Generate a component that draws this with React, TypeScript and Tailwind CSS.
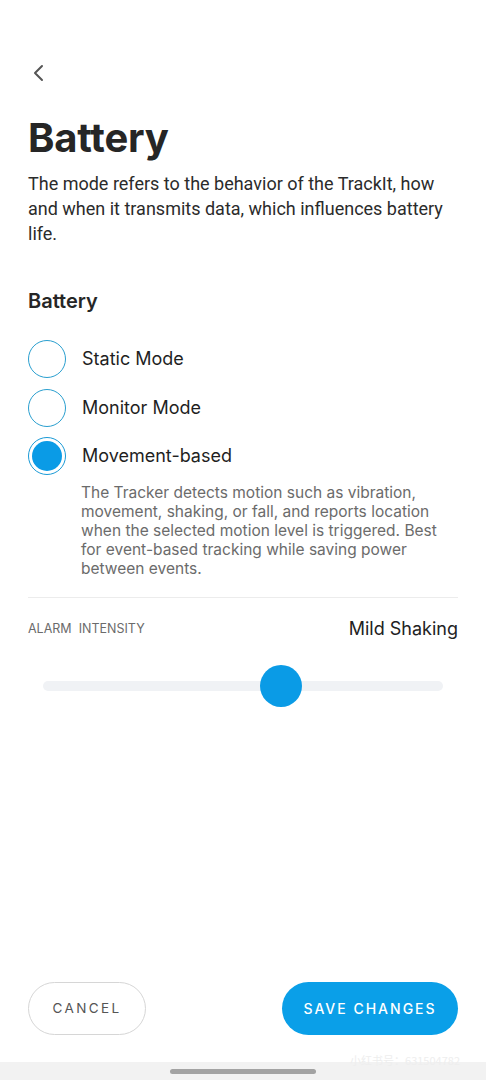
import React, { useState } from "react";

type ModeId = "static" | "monitor" | "movement";

interface Mode {
  id: ModeId;
  label: string;
}

const modes: Mode[] = [
  { id: "static", label: "Static Mode" },
  { id: "monitor", label: "Monitor Mode" },
  { id: "movement", label: "Movement-based" },
];

export default function App() {
  const [mode, setMode] = useState<ModeId>("movement");
  const [level] = useState(0.595);

  return (
    <div
      className="flex h-[1080px] w-[486px] flex-col bg-white text-[#262626]"
      style={{ fontFamily: "Inter, 'Noto Sans', sans-serif" }}
    >
      <div className="flex flex-1 flex-col px-[28px] pt-[62px]">
        <button className="ml-[3px] flex h-[22px] w-[22px] items-center justify-start text-[#555]">
          <svg width="14" height="20" viewBox="0 0 14 20" fill="none">
            <path d="M11 3L4 10L11 17" stroke="currentColor" strokeWidth="2" strokeLinecap="round" strokeLinejoin="round" />
          </svg>
        </button>

        <h1 className="mt-[30px] text-[40px] font-bold leading-[48px] tracking-[-0.2px] text-[#262626]">
          Battery
        </h1>
        <p
          className="mt-[9px] text-[18px] leading-[25px] text-[#2b2b2b]"
          style={{ fontFamily: "Roboto, 'Liberation Sans', sans-serif" }}
        >
          The mode refers to the behavior of the TrackIt, how and when it transmits data, which influences battery life.
        </p>

        <h2 className="mt-[42px] text-[20px] font-semibold leading-[26px] text-[#262626]">Battery</h2>

        <div className="mt-[26px] flex flex-col gap-[10.5px]">
          {modes.map((m) => {
            const active = mode === m.id;
            return (
              <div key={m.id} className="flex items-center gap-[16px]" onClick={() => setMode(m.id)}>
                <span
                  className={`flex h-[38px] w-[38px] items-center justify-center rounded-full border-[1.8px] ${
                    active ? "border-[#1a9ad6]" : "border-[#2a9fcf]"
                  }`}
                >
                  {active && <span className="h-[30px] w-[30px] rounded-full bg-[#0a9be6]" />}
                </span>
                <span className="text-[18px] leading-[24px] text-[#1f1f1f]">{m.label}</span>
              </div>
            );
          })}
        </div>

        <p className="ml-[53px] mt-[8px] text-[15.5px] leading-[19px] text-[#6b6b6b]">
          The Tracker detects motion such as vibration, movement, shaking, or fall, and reports location when the selected motion level is triggered. Best for event-based tracking while saving power between events.
        </p>

        <div className="mt-[19px] h-px bg-[#ececec]" />

        <div className="mt-[19px] flex items-center justify-between">
          <span className="text-[12.5px] uppercase leading-[18px] text-[#6b6b6b]">Alarm&nbsp; Intensity</span>
          <span className="text-[18px] leading-[24px] text-[#222]">Mild Shaking</span>
        </div>

        <div className="relative mx-[15px] mt-[24px] flex h-[42px] items-center">
          <div className="h-[10px] w-full rounded-full bg-[#f0f2f5]" />
          <div
            className="absolute top-0 h-[42px] w-[42px] -translate-x-1/2 rounded-full bg-[#0a9be6]"
            style={{ left: `${level * 100}%` }}
          />
        </div>
      </div>

      <div className="flex items-center justify-between px-[28px] pb-[27px]">
        <button className="flex h-[53px] w-[118px] items-center justify-center rounded-full border border-[#d6d6d6] text-[13.5px] tracking-[2.4px] text-[#555]">
          CANCEL
        </button>
        <button className="flex h-[53px] w-[176px] items-center justify-center rounded-full bg-[#0a9fe8] text-[14px] font-medium tracking-[2px] text-white">
          SAVE CHANGES
        </button>
      </div>

      <div className="relative flex h-[18px] items-center justify-center bg-[#f2f2f2]">
        <div className="h-[5px] w-[146px] rounded-full bg-[#a3a3a3]" />
        <span
          className="absolute right-[26px] -top-[10px] text-[11px] text-[#eeeeee]"
          style={{ fontFamily: "'Noto Sans CJK SC', sans-serif" }}
        >
          小红书号：631504782
        </span>
      </div>
    </div>
  );
}
